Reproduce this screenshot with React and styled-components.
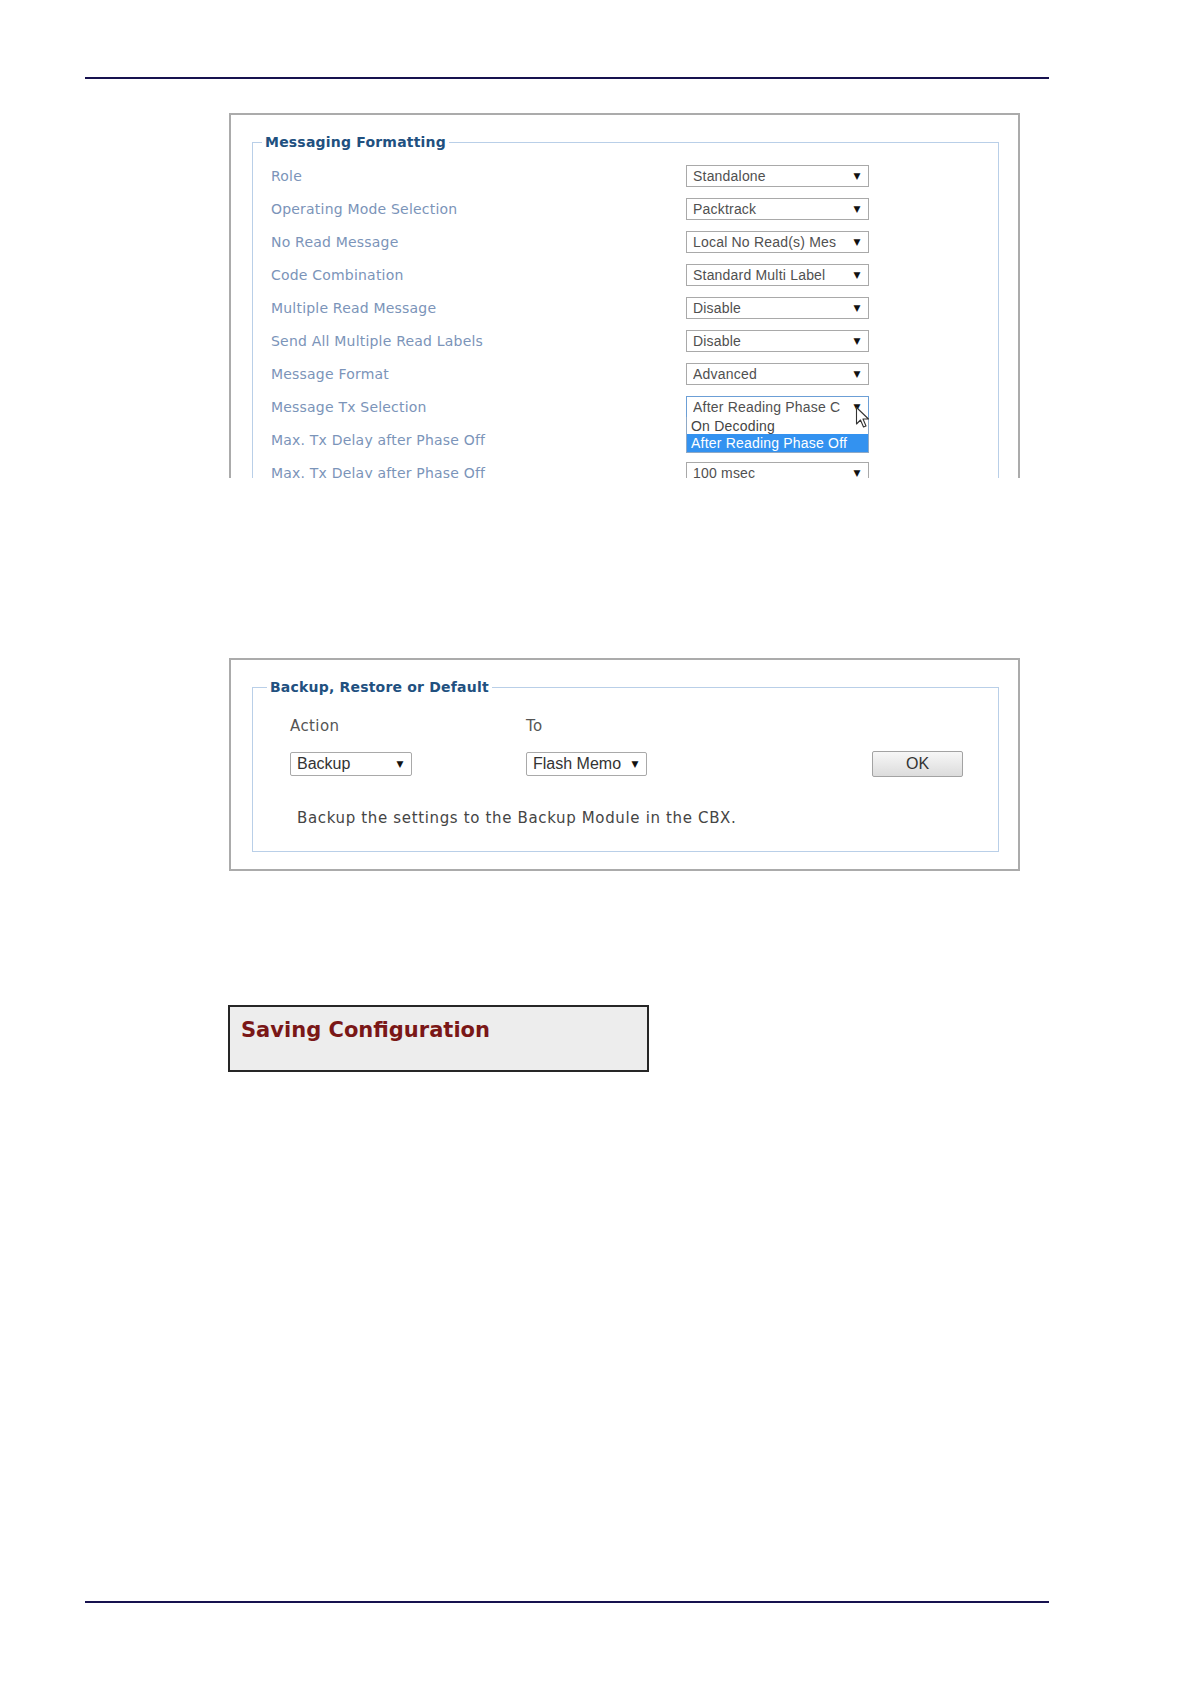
import React from 'react'
import styled, { createGlobalStyle } from 'styled-components'

const GlobalStyle = createGlobalStyle`
  html, body {
    margin: 0;
    padding: 0;
    background: #ffffff;
  }
  body {
    font-family: 'DejaVu Sans', Verdana, sans-serif;
  }
`

const Page = styled.div`
  width: 1190px;
  min-height: 1684px;
  padding-top: 77px;
  box-sizing: border-box;
  display: flex;
  flex-direction: column;
  align-items: flex-start;
`

const Rule = styled.div`
  width: 964px;
  height: 2px;
  margin-left: 85px;
  margin-top: ${p => p.$gap || 0}px;
  background: #17124f;
`

const Shot = styled.div`
  margin-left: 229px;
  margin-top: ${p => p.$gap}px;
  width: 791px;
  height: ${p => p.$height}px;
  box-sizing: border-box;
  border: 2px solid #ababab;
  border-bottom: ${p => (p.$cut ? 'none' : '2px solid #ababab')};
  padding: 18px 19px ${p => (p.$cut ? 0 : 17)}px 21px;
  background: #ffffff;
  overflow: hidden;
`

const Group = styled.fieldset`
  margin: 0;
  padding: 0;
  min-width: 0;
  border: 1px solid #b9cfe8;
  ${p => p.$cut && 'border-bottom: none; height: 400px;'}
`

const Legend = styled.legend`
  margin-left: ${p => p.$indent}px;
  padding: 0 3px;
  font-family: 'DejaVu Sans', Verdana, sans-serif;
  font-weight: bold;
  font-size: 14px;
  line-height: 18px;
  letter-spacing: 0.2px;
  color: #21507f;
`

const FormGrid = styled.div`
  display: grid;
  grid-template-columns: 415px 183px;
  grid-auto-rows: 33px;
  align-items: center;
  padding: 8px 0 0 18px;
`

const Label = styled.div`
  font-size: 14px;
  line-height: 18px;
  letter-spacing: 0.2px;
  color: #7b94b9;
  white-space: nowrap;
`

const SelectBox = styled.div`
  position: relative;
  width: ${p => p.$width}px;
  height: ${p => p.$height || 22}px;
  box-sizing: border-box;
  border: 1px solid ${p => (p.$focus ? '#6c9fd6' : '#a9a9a9')};
  border-radius: ${p => (p.$round ? 2 : 0)}px;
  background: #ffffff;
  display: flex;
  align-items: center;
  padding: 0 6px;
  font-family: 'Liberation Sans', Arial, sans-serif;
  font-size: ${p => p.$size || 14}px;
  letter-spacing: ${p => (p.$size ? 0 : 0.2)}px;
  color: ${p => p.$color || '#505050'};
  white-space: nowrap;
`

const SelectText = styled.span`
  flex: 1;
  overflow: hidden;
`

const Arrow = styled.span`
  width: 12px;
  margin-right: -1px;
  text-align: center;
  font-family: 'DejaVu Sans', sans-serif;
  font-size: 9px;
  color: #111111;
`

const ListBox = styled.div`
  position: absolute;
  top: 100%;
  left: -1px;
  right: -1px;
  z-index: 2;
  border: 1px solid #8fa9c6;
  border-top: none;
  background: #ffffff;
`

const Option = styled.div`
  height: ${p => (p.$active ? 18 : 17)}px;
  line-height: ${p => (p.$active ? 18 : 19)}px;
  padding: 0 4px;
  font-size: 14px;
  color: ${p => (p.$active ? '#ffffff' : '#444444')};
  background: ${p => (p.$active ? '#3392f0' : 'transparent')};
`

const Pointer = styled.svg`
  position: absolute;
  left: 168px;
  top: 9px;
  z-index: 3;
`

const Body = styled.div`
  padding: 21px 0 24px 37px;
`

const ActionGrid = styled.div`
  display: grid;
  grid-template-columns: 236px 346px 91px;
  grid-template-rows: 18px 26px;
  row-gap: 16px;
  align-items: center;
`

const FieldName = styled.div`
  font-size: 15px;
  line-height: 18px;
  letter-spacing: 0.4px;
  color: #555555;
`

const Button = styled.div`
  width: 91px;
  height: 26px;
  box-sizing: border-box;
  border: 1px solid #a3a3a3;
  border-radius: 2px;
  background: linear-gradient(#f7f7f7, #dcdcdc);
  display: flex;
  align-items: center;
  justify-content: center;
  font-family: 'Liberation Sans', Arial, sans-serif;
  font-size: 16px;
  color: #333333;
`

const Note = styled.div`
  margin: 32px 0 0 7px;
  font-size: 15px;
  line-height: 18px;
  letter-spacing: 0.65px;
  color: #454545;
`

const TitleBox = styled.div`
  margin: 134px 0 0 228px;
  width: 421px;
  height: 67px;
  box-sizing: border-box;
  border: 2px solid #262626;
  background: #ededed;
  padding: 10px 11px;
`

const Title = styled.div`
  font-weight: bold;
  font-size: 21px;
  line-height: 26px;
  color: #7a1717;
`

const rows = [
  ['Role', 'Standalone'],
  ['Operating Mode Selection', 'Packtrack'],
  ['No Read Message', 'Local No Read(s) Mes'],
  ['Code Combination', 'Standard Multi Label'],
  ['Multiple Read Message', 'Disable'],
  ['Send All Multiple Read Labels', 'Disable'],
  ['Message Format', 'Advanced'],
  ['Message Tx Selection', 'After Reading Phase C', true],
  ['Max. Tx Delay after Phase Off', ''],
  ['Max. Tx Delay after Phase Off', '100 msec'],
]

function Select({ value, width, open, ...rest }) {
  return (
    <SelectBox $width={width} $focus={open} {...rest}>
      <SelectText>{value}</SelectText>
      <Arrow>▼</Arrow>
      {open && (
        <>
          <ListBox>
            <Option>On Decoding</Option>
            <Option $active>After Reading Phase Off</Option>
          </ListBox>
          <Pointer width='15' height='23' viewBox='0 0 15 23'>
            <path
              d='M1.5 1.5 L1.5 18 L5.5 14 L8.5 21 L11 20 L8 13 L13.5 13 Z'
              fill='#ffffff'
              stroke='#333333'
              strokeWidth='1.1'
              strokeLinejoin='round'
            />
          </Pointer>
        </>
      )}
    </SelectBox>
  )
}

export default function App() {
  return (
    <>
      <GlobalStyle />
      <Page>
        <Rule />

        <Shot $gap={34} $height={365} $cut>
          <Group $cut>
            <Legend $indent={9}>Messaging Formatting</Legend>
            <FormGrid>
              {rows.map(([label, value, open], i) => (
                <React.Fragment key={i}>
                  <Label>{label}</Label>
                  <Select value={value} width={183} open={open} />
                </React.Fragment>
              ))}
            </FormGrid>
          </Group>
        </Shot>

        <Shot $gap={180} $height={213}>
          <Group>
            <Legend $indent={14}>Backup, Restore or Default</Legend>
            <Body>
              <ActionGrid>
                <FieldName>Action</FieldName>
                <FieldName>To</FieldName>
                <div />
                <Select value='Backup' width={122} $height={24} $size={16} $color='#333' $round />
                <Select value='Flash Memo' width={121} $height={24} $size={16} $color='#333' $round />
                <Button>OK</Button>
              </ActionGrid>
              <Note>Backup the settings to the Backup Module in the CBX.</Note>
            </Body>
          </Group>
        </Shot>

        <TitleBox>
          <Title>Saving Configuration</Title>
        </TitleBox>

        <Rule $gap={529} />
      </Page>
    </>
  )
}
